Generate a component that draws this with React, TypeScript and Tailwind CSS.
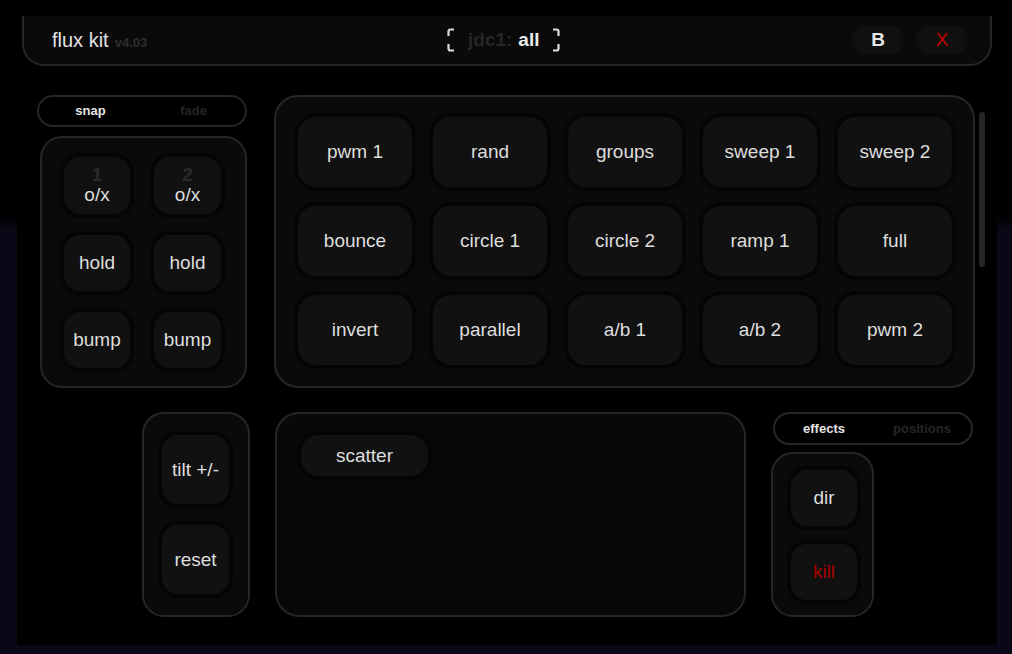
import React from 'react';

const font = { fontFamily: '"Liberation Sans", Arial, sans-serif' };

function Pad({ label, top, className = '', textClass = 'text-[#dedede]' }: { label: string; top?: string; className?: string; textClass?: string }) {
  return (
    <div
      className={`flex flex-col items-center justify-center rounded-[20px] border-[4px] border-[#050505] bg-[#111111] ${className}`}
    >
      {top && <span className="text-[19px] font-bold leading-[18px] text-[#2a2a2a]">{top}</span>}
      <span className={`text-[19px] leading-[22px] ${textClass}`}>{label}</span>
    </div>
  );
}

function Toggle({ on, off, className = '' }: { on: string; off: string; className?: string }) {
  return (
    <div className={`flex items-center rounded-full border-2 border-[#262626] text-[13px] font-bold ${className}`}>
      <span className="flex-1 text-center text-[#e4e4e4]">{on}</span>
      <span className="flex-1 text-center text-[#262626]">{off}</span>
    </div>
  );
}

function Bracket({ flip }: { flip?: boolean }) {
  return (
    <svg width="9" height="24" viewBox="0 0 9 24" className={flip ? 'scale-x-[-1]' : ''}>
      <path d="M7 1.5 H3.5 Q1.5 1.5 1.5 3.5 V8 M1.5 16 V20.5 Q1.5 22.5 3.5 22.5 H7" fill="none" stroke="#dcdcdc" strokeWidth="2.2" />
    </svg>
  );
}

const patterns = [
  'pwm 1', 'rand', 'groups', 'sweep 1', 'sweep 2',
  'bounce', 'circle 1', 'circle 2', 'ramp 1', 'full',
  'invert', 'parallel', 'a/b 1', 'a/b 2', 'pwm 2',
];

export default function App() {
  return (
    <div
      className="h-[654px] w-[1012px] overflow-hidden bg-[linear-gradient(to_bottom,#000_0%,#000_33%,#0a0816_35%,#0a0816_100%)]"
      style={font}
    >
      <div className="ml-[17px] h-[645px] w-[980px] bg-black pt-[16px]">
        {/* header */}
        <div className="mx-[5px] flex h-[50px] items-center rounded-b-[22px] border-x-2 border-b-2 border-[#262626] bg-[#0a0a0a] pl-[28px] pr-[20px]">
          <div className="flex w-[380px] items-baseline gap-[6px]">
            <span className="text-[20px] text-[#e2e2e2]">flux kit</span>
            <span className="text-[13px] font-bold text-[#2e2e2e]">v4.03</span>
          </div>
          <div className="flex items-center gap-[12px] pl-[15px]">
            <Bracket />
            <div className="flex items-baseline gap-[6px] text-[19px] font-bold">
              <span className="text-[#262626]">jdc1:</span>
              <span className="text-[#ececec]">all</span>
            </div>
            <Bracket flip />
          </div>
          <div className="ml-auto mr-[2px] flex gap-[12px]">
            <div className="flex h-[28px] w-[52px] items-center justify-center rounded-full bg-[#101010] text-[19px] font-bold text-[#e6e6e6]">B</div>
            <div className="flex h-[28px] w-[52px] items-center justify-center rounded-full bg-[#101010] text-[19px] text-[#c00000]">X</div>
          </div>
        </div>

        {/* row 1 */}
        <div className="mt-[29px] flex">
          <div className="ml-[20px] flex w-[210px] flex-col gap-[9px]">
            <Toggle on="snap" off="fade" className="h-[32px] w-[210px]" />
            <div className="ml-[3px] grid h-[252px] w-[207px] grid-cols-[74px_75px] content-start gap-x-[16px] gap-y-[13px] rounded-[22px] border-2 border-[#262626] bg-[#0a0a0a] pl-[18px] pt-[15px]">
              <Pad label="o/x" top="1" className="h-[65px]" />
              <Pad label="o/x" top="2" className="h-[65px]" />
              <Pad label="hold" className="h-[64px]" />
              <Pad label="hold" className="h-[64px]" />
              <Pad label="bump" className="h-[64px]" />
              <Pad label="bump" className="h-[64px]" />
            </div>
          </div>
          <div className="ml-[27px] grid h-[293px] w-[701px] grid-cols-[repeat(5,122px)] content-start gap-x-[13px] gap-y-[11px] rounded-[24px] border-2 border-[#262626] bg-[#0a0a0a] pl-[18px] pt-[16px]">
            {patterns.map((p) => (
              <Pad key={p} label={p} className="h-[78px] rounded-[22px]" />
            ))}
          </div>
          <div className="ml-[4px] mt-[17px] h-[155px] w-[6px] rounded-full bg-[#262626]" />
        </div>

        {/* row 2 */}
        <div className="mt-[24px] flex">
          <div className="ml-[125px] flex h-[205px] w-[108px] flex-col gap-[13px] rounded-[22px] border-2 border-[#262626] bg-[#0a0a0a] pl-[14px] pt-[17px]">
            <Pad label="tilt +/-" className="h-[77px] w-[75px]" />
            <Pad label="reset" className="h-[77px] w-[75px]" />
          </div>
          <div className="ml-[25px] h-[205px] w-[471px] rounded-[24px] border-2 border-[#262626] bg-[#080808] pl-[20px] pt-[17px]">
            <Pad label="scatter" className="h-[49px] w-[135px] rounded-[22px]" />
          </div>
          <div className="ml-[25px] flex flex-col gap-[7px]">
            <Toggle on="effects" off="positions" className="ml-[2px] h-[33px] w-[200px]" />
            <div className="flex h-[165px] w-[103px] flex-col gap-[10px] rounded-[22px] border-2 border-[#262626] bg-[#0a0a0a] pl-[14px] pt-[12px]">
              <Pad label="dir" className="h-[64px] w-[74px]" />
              <Pad label="kill" className="h-[64px] w-[74px]" textClass="text-[#a80000]" />
            </div>
          </div>
        </div>
      </div>
    </div>
  );
}
